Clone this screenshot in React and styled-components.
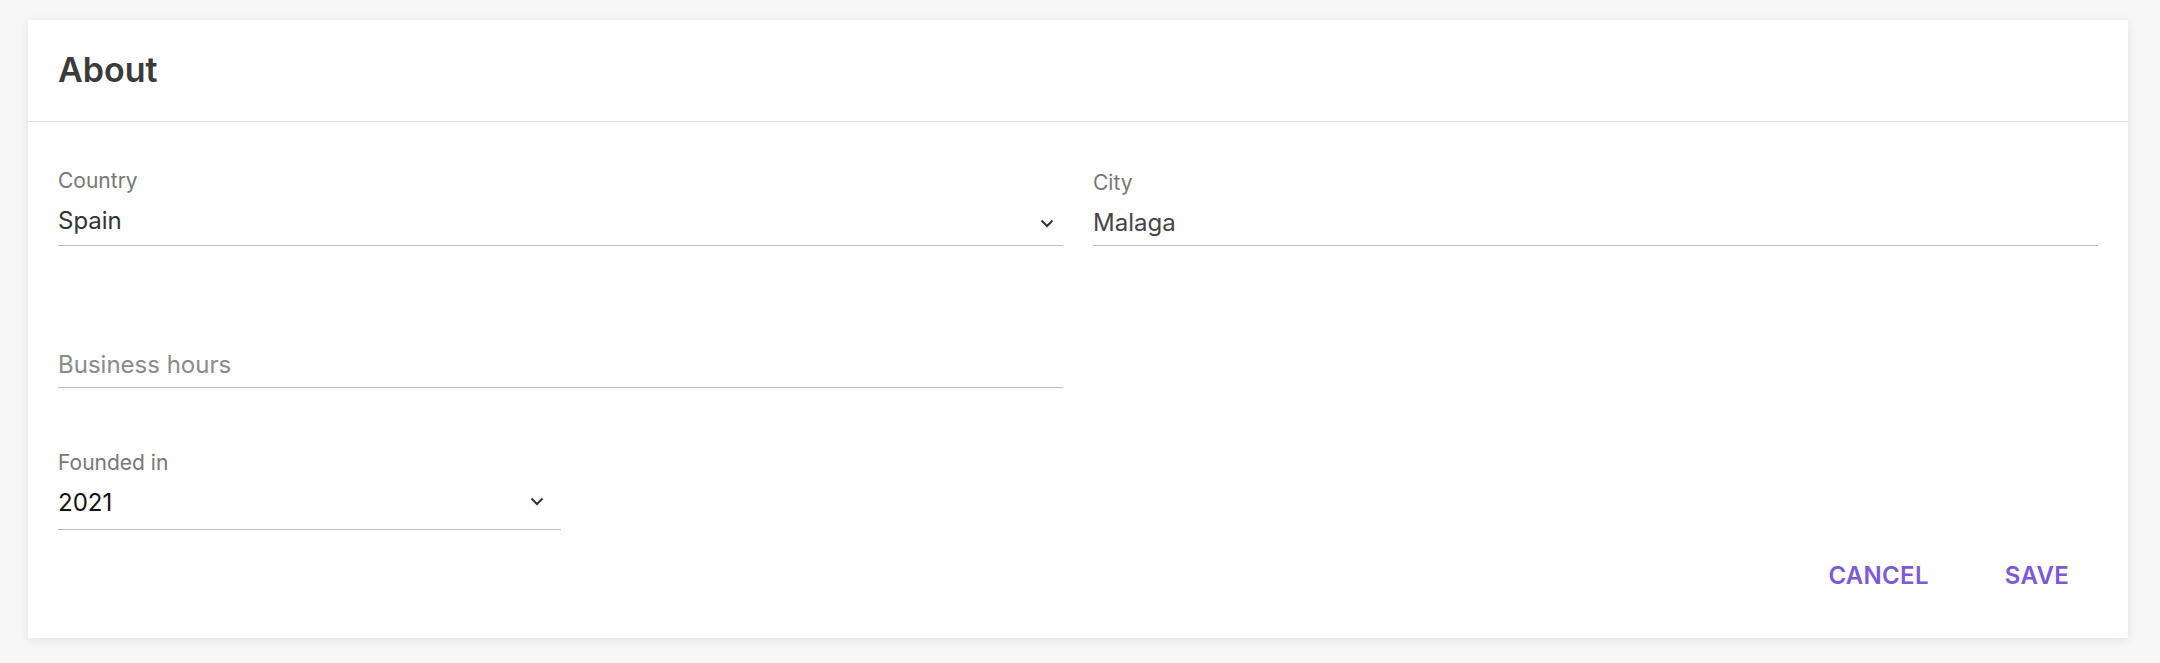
import styled, { createGlobalStyle } from "styled-components";

const GlobalStyle = createGlobalStyle`
    html, body {
        margin: 0;
        background: #f7f7f7;
        font-family: Inter, "Noto Sans", sans-serif;
    }
`;

const Page = styled.div`
    padding: 20px 32px 25px 28px;
`;

const Card = styled.section`
    background: #fff;
    box-shadow: 0 2px 10px rgba(0, 0, 0, 0.09);
`;

const Header = styled.header`
    display: flex;
    align-items: center;
    padding: 30px 30px 31px;
    border-bottom: 1px solid #e2e2e2;
`;

const Title = styled.h2`
    margin: 0;
    font-size: 34px;
    line-height: 40px;
    font-weight: 600;
    color: #3b3b3b;
`;

const Body = styled.div`
    display: flex;
    flex-direction: column;
    padding: 47px 30px 38px;
`;

const Row = styled.div`
    display: grid;
    grid-template-columns: 1fr 1fr;
    column-gap: 30px;
    margin-top: ${props => props.$gap || 0}px;
`;

const Field = styled.div`
    display: flex;
    flex-direction: column;
    row-gap: 14px;
    padding-top: ${props => props.$shift || 0}px;
    width: ${props => props.$half ? "50%" : "auto"};
`;

const Label = styled.label`
    display: block;
    font-size: 21px;
    line-height: 24px;
    color: #777;
    visibility: ${props => props.$hidden ? "hidden" : "visible"};
`;

const Control = styled.div`
    display: flex;
    align-items: center;
    padding-bottom: ${props => props.$pad ?? 11}px;
    border-bottom: 1px solid #bdbdbd;
`;

const Value = styled.span`
    flex: 1;
    font-size: 24px;
    line-height: 28px;
    color: ${props => props.$placeholder ? "#8a8a8a" : props.$color || "#333"};
`;

const Chevron = styled.svg`
    flex: none;
    width: 14px;
    height: 9px;
    margin-right: ${props => props.$right || 9}px;
    margin-top: ${props => props.$top || 0}px;
    color: #333;
`;

const Actions = styled.div`
    display: flex;
    justify-content: flex-end;
    column-gap: 14px;
    margin: 22px -2px 0 0;
`;

const TextButton = styled.button`
    border: 0;
    background: none;
    padding: 10px 31px;
    font-family: inherit;
    font-size: 24px;
    line-height: 28px;
    font-weight: 600;
    letter-spacing: 0.3px;
    color: #7c5ad6;
    cursor: pointer;
`;

const Arrow = ({ right, top }) => (
    <Chevron viewBox="0 0 14 9" $right={right} $top={top}>
        <polyline points="1.5,1.5 7,7 12.5,1.5" fill="none" stroke="currentColor" strokeWidth="2" />
    </Chevron>
);

const App = () => {
    return (
        <Page>
            <GlobalStyle />
            <Card>
                <Header>
                    <Title>About</Title>
                </Header>
                <Body>
                    <Row>
                        <Field>
                            <Label>Country</Label>
                            <Control $pad={10}>
                                <Value>Spain</Value>
                                <Arrow right={9} top={4} />
                            </Control>
                        </Field>
                        <Field $shift={2}>
                            <Label>City</Label>
                            <Control $pad={8}>
                                <Value $color="#454545">Malaga</Value>
                            </Control>
                        </Field>
                    </Row>
                    <Row $gap={67}>
                        <Field>
                            <Label $hidden>Business hours</Label>
                            <Control $pad={8}>
                                <Value $placeholder>Business hours</Value>
                            </Control>
                        </Field>
                    </Row>
                    <Row $gap={63}>
                        <Field $half>
                            <Label>Founded in</Label>
                            <Control $pad={12}>
                                <Value $color="#111">2021</Value>
                                <Arrow right={17} top={-3} />
                            </Control>
                        </Field>
                    </Row>
                    <Actions>
                        <TextButton>CANCEL</TextButton>
                        <TextButton>SAVE</TextButton>
                    </Actions>
                </Body>
            </Card>
        </Page>
    );
};

export default App;
